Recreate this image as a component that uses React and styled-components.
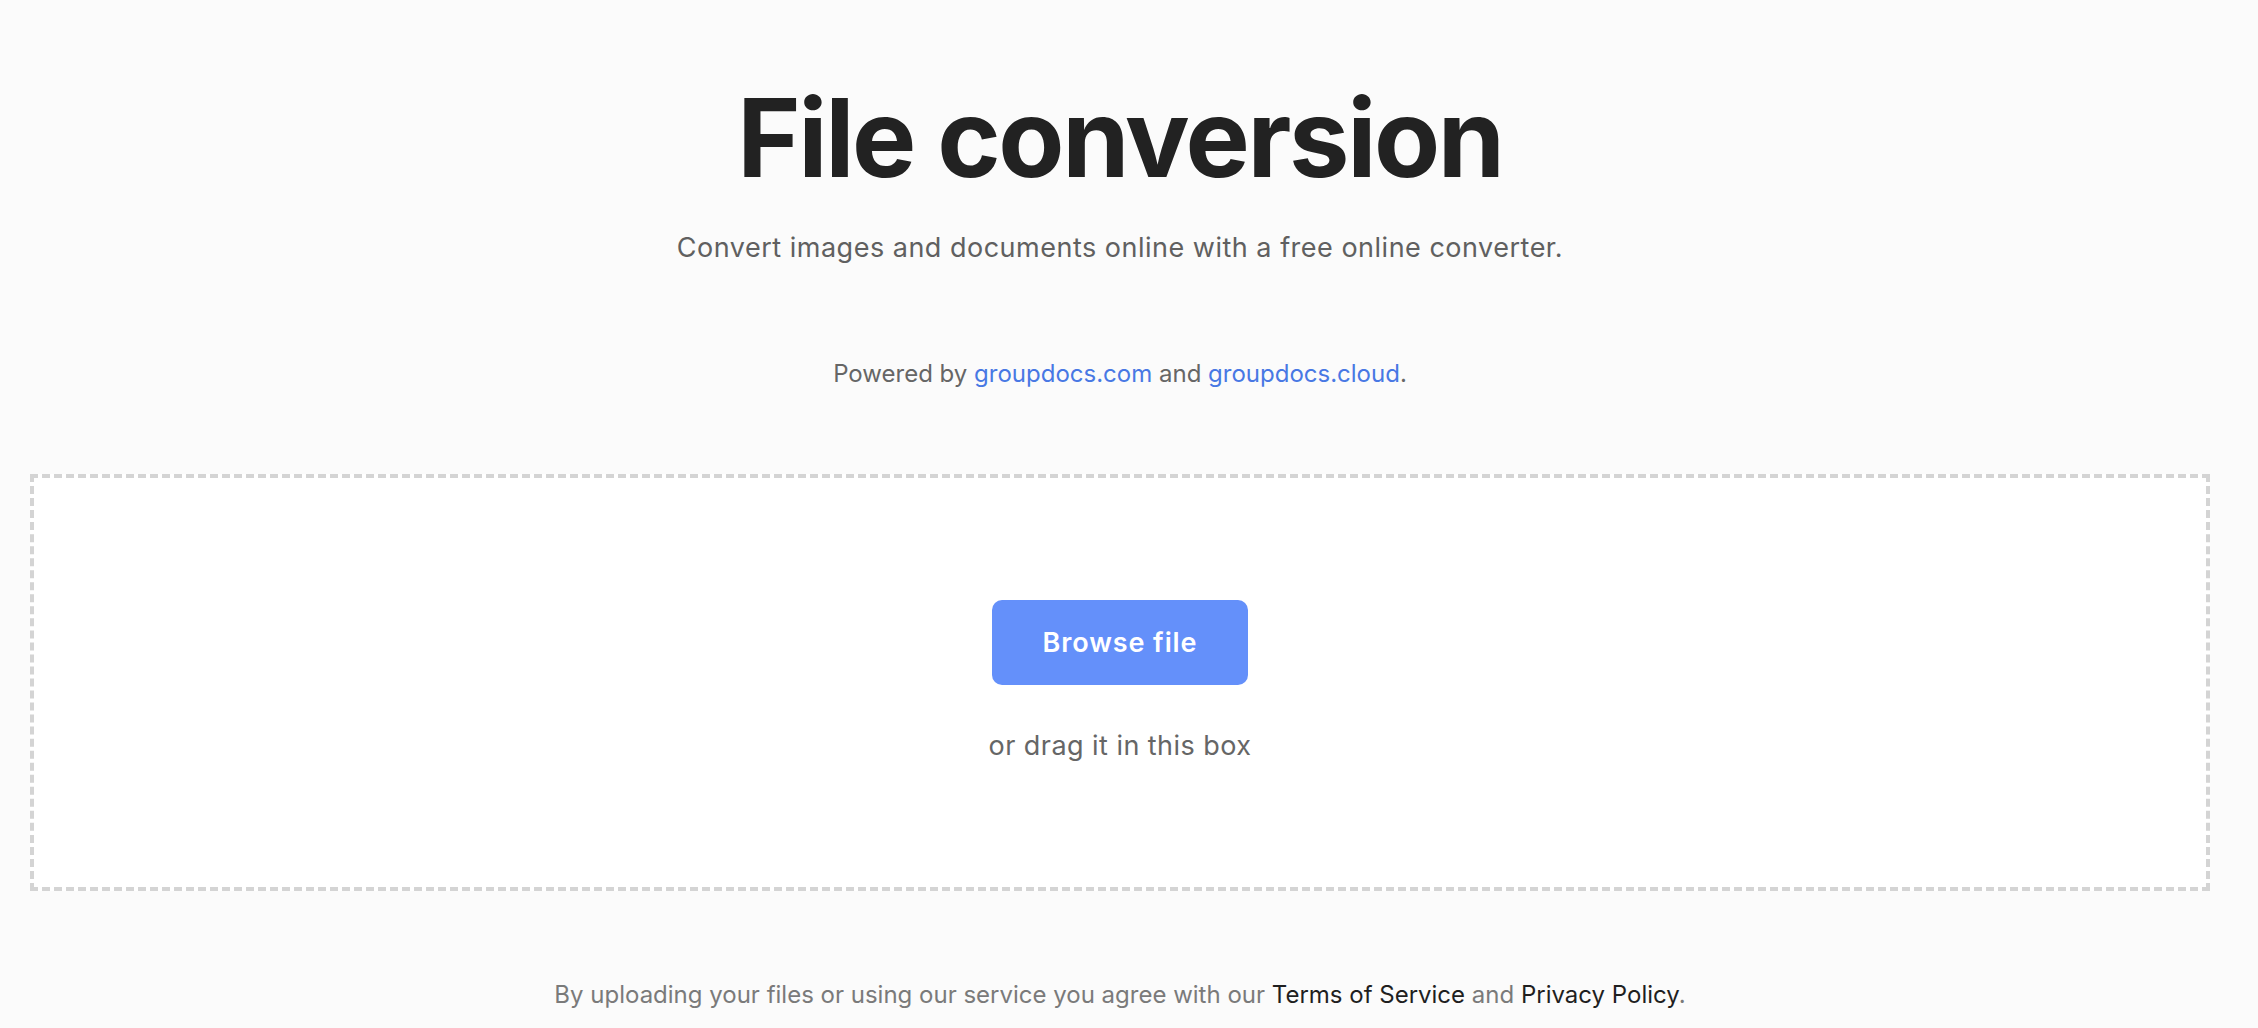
import React from "react";
import styled, { createGlobalStyle } from "styled-components";

const GlobalStyle = createGlobalStyle`
    html, body {
        margin: 0;
        padding: 0;
        background: #fbfbfb;
        font-family: Inter, "Noto Sans", "Liberation Sans", sans-serif;
    }
`;

// the reference has a scrollbar on the right, so the content is centred a bit left
const Page = styled.main`
    box-sizing: border-box;
    width: 100%;
    padding: 84px 48px 40px 30px;
    display: flex;
    flex-direction: column;
    align-items: center;
`;

const Title = styled.h1`
    margin: 0;
    font-size: 108px;
    line-height: 108px;
    font-weight: 700;
    letter-spacing: -2.4px;
    color: #222222;
`;

const Subtitle = styled.p`
    margin: 38px 0 0;
    font-size: 27px;
    line-height: 36px;
    letter-spacing: 0.5px;
    color: #606060;
`;

const Powered = styled.p`
    margin: 92px 0 0;
    font-size: 24px;
    line-height: 32px;
    color: #666666;
`;

const Link = styled.a`
    color: ${(p) => (p.$dark ? "#1f1f1f" : "#4878e4")};
    text-decoration: none;
`;

const DropZone = styled.section`
    box-sizing: border-box;
    margin-top: 84px;
    width: 100%;
    height: 417px;
    border: 4px dashed #d4d4d4;
    background: #ffffff;
    display: flex;
    flex-direction: column;
    align-items: center;
    padding-top: 122px;
`;

const BrowseButton = styled.button`
    width: 256px;
    height: 85px;
    border: none;
    border-radius: 10px;
    background: #6490fa;
    color: #ffffff;
    font-family: inherit;
    font-size: 27px;
    font-weight: 600;
    letter-spacing: 0.9px;
    cursor: pointer;
`;

const DragHint = styled.p`
    margin: 43px 0 0;
    font-size: 27px;
    line-height: 36px;
    letter-spacing: 0.45px;
    color: #666666;
`;

const Terms = styled.p`
    margin: 88px 0 0;
    font-size: 24px;
    line-height: 32px;
    color: #7a7a7a;
`;

function App() {
    return (
        <>
            <GlobalStyle />
            <Page>
                <Title>File conversion</Title>
                <Subtitle>Convert images and documents online with a free online converter.</Subtitle>
                <Powered>
                    Powered by <Link href="#">groupdocs.com</Link> and{" "}
                    <Link href="#">groupdocs.cloud</Link>.
                </Powered>

                <DropZone>
                    <BrowseButton type="button">Browse file</BrowseButton>
                    <DragHint>or drag it in this box</DragHint>
                </DropZone>

                <Terms>
                    By uploading your files or using our service you agree with our{" "}
                    <Link href="#" $dark>Terms of Service</Link> and{" "}
                    <Link href="#" $dark>Privacy Policy</Link>.
                </Terms>
            </Page>
        </>
    );
}

export default App;
